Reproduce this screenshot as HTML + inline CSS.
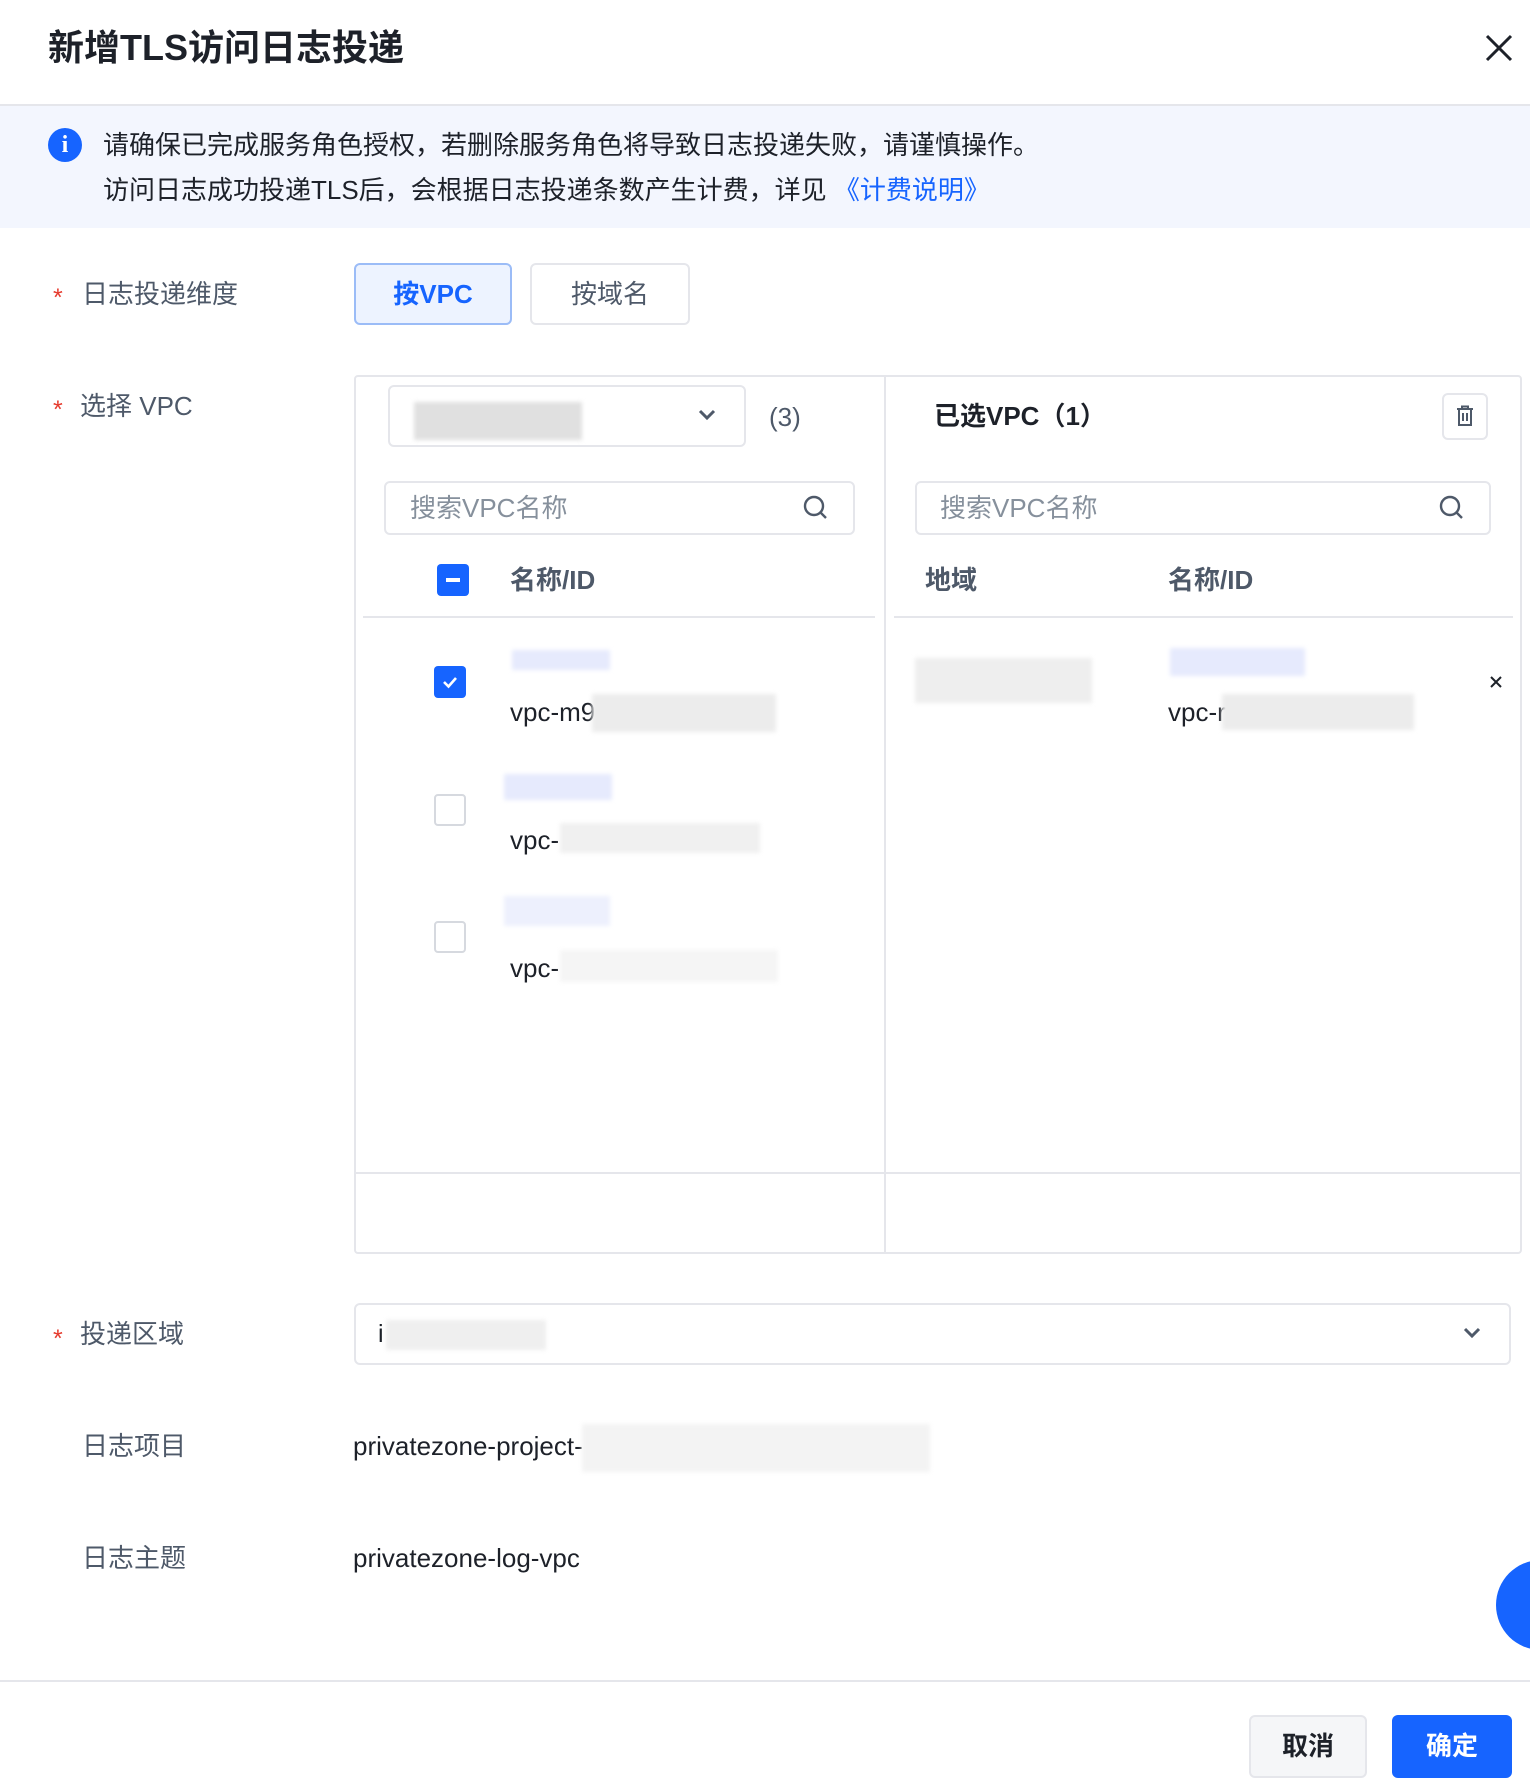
<!DOCTYPE html>
<html><head><meta charset="utf-8"><style>
*{margin:0;padding:0;box-sizing:border-box}
body{width:1530px;height:1790px;background:#fff;position:relative;overflow:hidden;font-family:"Liberation Sans","Noto Sans CJK SC",sans-serif;color:#1d2129;font-size:25px}
.a{position:absolute}
.t{position:absolute;line-height:1;white-space:nowrap}
.star{color:#e63b2e;font-size:25px}
.lbl{color:#4e5969;font-size:26px}
.bl{position:absolute;background:#ececec;filter:blur(2px)}
.bb{position:absolute;background:#e6eafd;filter:blur(2px)}
.cb{position:absolute;width:32px;height:32px;border:2px solid #d6d9df;border-radius:4px;background:#fff}
</style></head><body>
<div class="t" style="left:48px;top:30px;font-size:36px;font-weight:600;color:#1d2129">新增TLS访问日志投递</div>
<svg class="a" style="left:1484px;top:33px" width="30" height="30" viewBox="0 0 30 30"><path d="M3 3L27 27M27 3L3 27" stroke="#1d2129" stroke-width="3"/></svg>
<div class="a" style="left:0;top:104px;width:1530px;height:2px;background:#e5e6eb"></div>
<div class="a" style="left:0;top:106px;width:1530px;height:122px;background:#f3f6fe"></div>
<div class="a" style="left:48px;top:128px;width:34px;height:34px;border-radius:50%;background:#1664ff;color:#fff;font-weight:bold;font-size:24px;text-align:center;line-height:34px;font-family:'Liberation Serif',serif">i</div>
<div class="t" style="left:103px;top:132px;font-size:26px">请确保已完成服务角色授权，若删除服务角色将导致日志投递失败，请谨慎操作。</div>
<div class="t" style="left:103px;top:177px;font-size:26px">访问日志成功投递TLS后，会根据日志投递条数产生计费，详见 <span style="color:#1664ff">《计费说明》</span></div>

<div class="t star" style="left:53px;top:286px">*</div>
<div class="t lbl" style="left:82px;top:281px">日志投递维度</div>
<div class="a" style="left:354px;top:263px;width:158px;height:62px;border:2px solid #9bbcf7;background:#edf3ff;border-radius:6px;color:#1664ff;font-size:26px;font-weight:600;text-align:center;line-height:58px">按VPC</div>
<div class="a" style="left:530px;top:263px;width:160px;height:62px;border:2px solid #e5e6eb;background:#fff;border-radius:6px;color:#4e5969;font-size:26px;text-align:center;line-height:58px">按域名</div>

<div class="t star" style="left:53px;top:398px">*</div>
<div class="t lbl" style="left:80px;top:393px">选择 VPC</div>
<div class="a" style="left:354px;top:375px;width:1168px;height:879px;border:2px solid #e5e6eb;border-radius:4px"></div>
<div class="a" style="left:884px;top:377px;width:2px;height:875px;background:#e5e6eb"></div>
<div class="a" style="left:356px;top:1172px;width:1164px;height:2px;background:#e5e6eb"></div>

<div class="a" style="left:388px;top:385px;width:358px;height:62px;border:2px solid #e5e6eb;border-radius:6px"></div>
<div class="bl" style="left:414px;top:402px;width:168px;height:38px;background:#e0e0e0"></div>
<svg class="a" style="left:697px;top:408px" width="20" height="14" viewBox="0 0 20 14"><path d="M3 3L10 10L17 3" stroke="#4e5969" stroke-width="3" fill="none"/></svg>
<div class="t" style="left:769px;top:404px;color:#4e5969;font-size:26px">(3)</div>
<div class="t" style="left:934px;top:403px;font-size:26px;font-weight:600;color:#1d2129">已选VPC（1）</div>
<div class="a" style="left:1442px;top:393px;width:46px;height:47px;border:2px solid #e5e6eb;border-radius:6px"></div>
<svg class="a" style="left:1455px;top:405px" width="20" height="22" viewBox="0 0 20 22"><path d="M2 4H18M7 4V1.5H13V4M4 4V20H16V4M8 8V16M12 8V16" stroke="#4e5969" stroke-width="2" fill="none"/></svg>

<div class="a" style="left:384px;top:481px;width:471px;height:54px;border:2px solid #e5e6eb;border-radius:6px"></div>
<div class="t" style="left:410px;top:495px;color:#86909c;font-size:26px">搜索VPC名称</div>
<svg class="a" style="left:802px;top:494px" width="28" height="28" viewBox="0 0 28 28"><circle cx="12" cy="12" r="9" stroke="#4e5969" stroke-width="2.4" fill="none"/><path d="M18.5 18.5L24 24" stroke="#4e5969" stroke-width="2.4"/></svg>
<div class="a" style="left:915px;top:481px;width:576px;height:54px;border:2px solid #e5e6eb;border-radius:6px"></div>
<div class="t" style="left:940px;top:495px;color:#86909c;font-size:26px">搜索VPC名称</div>
<svg class="a" style="left:1438px;top:494px" width="28" height="28" viewBox="0 0 28 28"><circle cx="12" cy="12" r="9" stroke="#4e5969" stroke-width="2.4" fill="none"/><path d="M18.5 18.5L24 24" stroke="#4e5969" stroke-width="2.4"/></svg>

<div class="a" style="left:437px;top:564px;width:32px;height:32px;border-radius:4px;background:#1664ff"></div>
<div class="a" style="left:446px;top:578px;width:14px;height:4px;background:#fff"></div>
<div class="t" style="left:510px;top:567px;font-weight:600;color:#4e5969;font-size:26px">名称/ID</div>
<div class="t" style="left:925px;top:567px;font-weight:600;color:#4e5969;font-size:26px">地域</div>
<div class="t" style="left:1168px;top:567px;font-weight:600;color:#4e5969;font-size:26px">名称/ID</div>
<div class="a" style="left:363px;top:616px;width:512px;height:2px;background:#e5e6eb"></div>
<div class="a" style="left:894px;top:616px;width:619px;height:2px;background:#e5e6eb"></div>

<div class="a" style="left:434px;top:666px;width:32px;height:32px;border-radius:4px;background:#1664ff"></div>
<svg class="a" style="left:440px;top:672px" width="20" height="20" viewBox="0 0 20 20"><path d="M4 10L8.5 14.5L16 6" stroke="#fff" stroke-width="2.6" fill="none"/></svg>
<div class="bb" style="left:512px;top:650px;width:98px;height:20px"></div>
<div class="t" style="left:510px;top:699px;font-size:26px">vpc-m9</div>
<div class="bl" style="left:592px;top:694px;width:184px;height:38px"></div>

<div class="cb" style="left:434px;top:794px"></div>
<div class="bb" style="left:504px;top:774px;width:108px;height:26px"></div>
<div class="t" style="left:510px;top:827px;font-size:26px">vpc-</div>
<div class="bl" style="left:560px;top:823px;width:200px;height:30px;background:#f0f0f0"></div>

<div class="cb" style="left:434px;top:921px"></div>
<div class="bb" style="left:504px;top:896px;width:106px;height:30px;background:#edf0fd"></div>
<div class="t" style="left:510px;top:955px;font-size:26px">vpc-</div>
<div class="bl" style="left:560px;top:950px;width:218px;height:32px;background:#f5f5f5"></div>

<div class="bl" style="left:915px;top:658px;width:177px;height:45px;background:#eeeeee"></div>
<div class="bb" style="left:1170px;top:648px;width:135px;height:28px"></div>
<div class="t" style="left:1168px;top:699px;font-size:26px">vpc-r</div>
<div class="bl" style="left:1222px;top:694px;width:192px;height:36px"></div>
<svg class="a" style="left:1488px;top:674px" width="16" height="16" viewBox="0 0 16 16"><path d="M3 3L13 13M13 3L3 13" stroke="#1d2129" stroke-width="2"/></svg>

<div class="t star" style="left:53px;top:1327px">*</div>
<div class="t lbl" style="left:80px;top:1321px">投递区域</div>
<div class="a" style="left:354px;top:1303px;width:1157px;height:62px;border:2px solid #e5e6eb;border-radius:6px"></div>
<div class="t" style="left:378px;top:1322px">i</div>
<div class="bl" style="left:386px;top:1320px;width:160px;height:30px;background:#efefef"></div>
<svg class="a" style="left:1462px;top:1326px" width="20" height="14" viewBox="0 0 20 14"><path d="M3 3L10 10L17 3" stroke="#4e5969" stroke-width="3" fill="none"/></svg>

<div class="t lbl" style="left:82px;top:1433px">日志项目</div>
<div class="t" style="left:353px;top:1433px;font-size:26px">privatezone-project-</div>
<div class="bl" style="left:582px;top:1424px;width:348px;height:48px;background:#f3f3f3"></div>
<div class="t lbl" style="left:82px;top:1545px">日志主题</div>
<div class="t" style="left:353px;top:1545px;font-size:26px">privatezone-log-vpc</div>

<div class="a" style="left:1496px;top:1560px;width:90px;height:90px;border-radius:50%;background:#1664ff"></div>

<div class="a" style="left:0;top:1680px;width:1530px;height:2px;background:#e5e6eb"></div>
<div class="a" style="left:1249px;top:1715px;width:118px;height:63px;border:2px solid #e5e6eb;background:#f5f6f8;border-radius:6px;font-size:26px;font-weight:600;color:#1d2129;text-align:center;line-height:59px">取消</div>
<div class="a" style="left:1392px;top:1715px;width:120px;height:63px;background:#1664ff;border-radius:6px;font-size:26px;font-weight:600;color:#fff;text-align:center;line-height:63px">确定</div>
</body></html>
